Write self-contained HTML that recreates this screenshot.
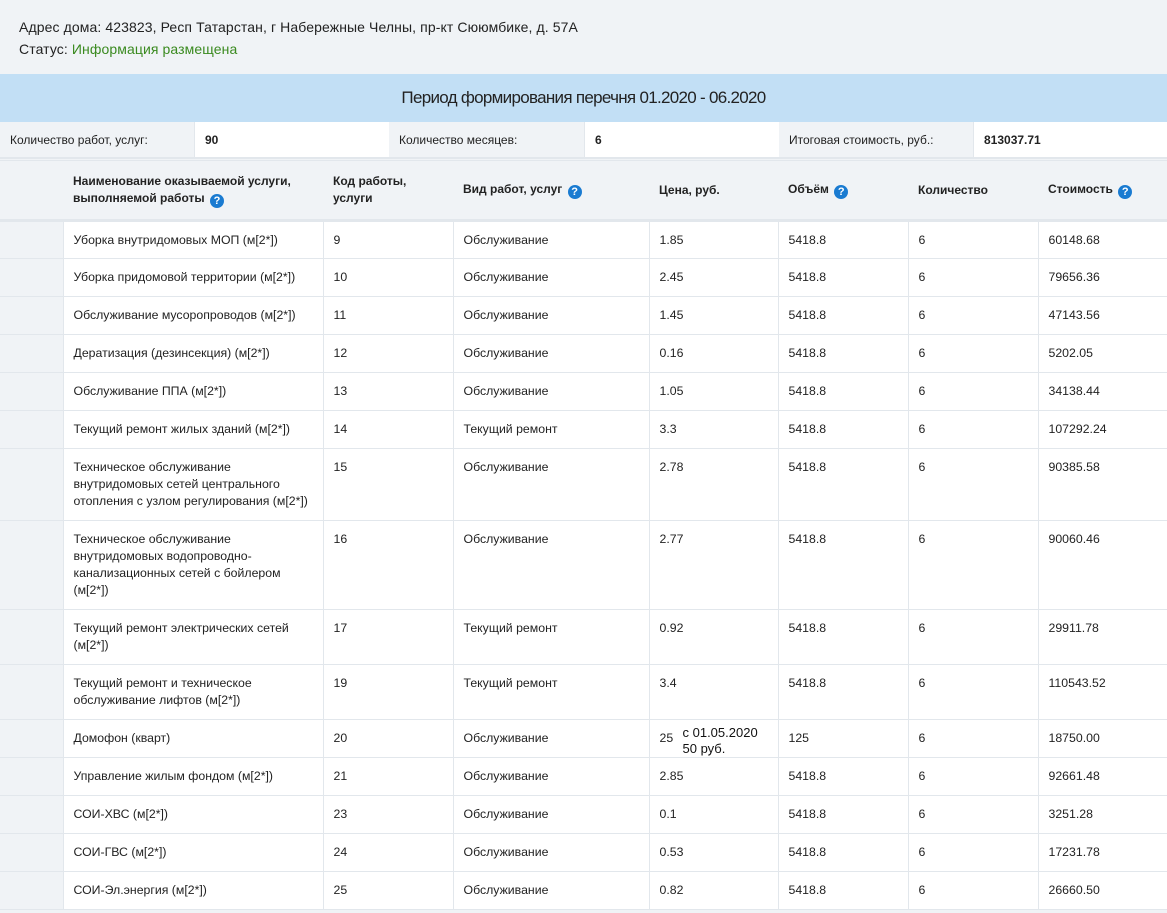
<!DOCTYPE html>
<html><head><meta charset="utf-8"><style>
body{margin:0;width:1167px;height:913px;overflow:hidden;background:#f0f3f6;font-family:"Liberation Sans",Arial,sans-serif;color:#222;}
.top{position:absolute;left:19px;top:16px;font-size:14px;line-height:22px;letter-spacing:0.1px}
.top .g{color:#3a8a1f}
.band{position:absolute;left:0;top:74px;width:1167px;height:48px;background:#c2dff5;text-align:center;font-size:17px;line-height:48px;letter-spacing:-0.7px}
.info{position:absolute;top:122px;left:0;width:1167px;height:38px;font-size:12px;letter-spacing:0}
.info div{position:absolute;top:0;height:37px;line-height:37px;padding-left:10px;box-sizing:border-box;border-bottom:2px solid #e2e7ec}
.w{background:#fff;font-weight:bold}
.lb{background:#f0f3f6;border-right:1px solid #e2e7ec}
table{position:absolute;top:160px;left:0;border-collapse:collapse;table-layout:fixed;width:1167px;font-size:12.3px;letter-spacing:0}
td,th{border:1px solid #e2e7ec;vertical-align:top;padding:10px 10px 0 10px;line-height:17px;text-align:left;box-sizing:border-box}
th{background:#f0f3f6;font-weight:bold;height:60px;padding-top:12px;border-bottom:3px solid #e2e7ec;border-left:none;border-right:none;font-size:12px}
td{background:#fff}
td.f{background:#f0f3f6;border-left:none}
td.n{padding-right:14px}
th.v{vertical-align:middle;padding-top:0}
.q{display:inline-block;width:14px;height:14px;border-radius:50%;background:#1a7bd1;color:#fff;font-size:11px;line-height:14px;text-align:center;font-weight:bold;vertical-align:-2px;margin-left:2px}
</style></head><body>
<div class="top">Адрес дома: 423823, Респ Татарстан, г Набережные Челны, пр-кт Сююмбике, д. 57А<br>Статус: <span class="g">Информация размещена</span></div>
<div class="band">Период формирования перечня 01.2020 - 06.2020</div>
<div class="info">
<div class="lb" style="left:0;width:195px">Количество работ, услуг:</div>
<div class="w" style="left:195px;width:194px">90</div>
<div class="lb" style="left:389px;width:196px">Количество месяцев:</div>
<div class="w" style="left:585px;width:194px">6</div>
<div class="lb" style="left:779px;width:195px">Итоговая стоимость, руб.:</div>
<div class="w" style="left:974px;width:193px">813037.71</div>
</div>
<table>
<colgroup><col style="width:63px"><col style="width:260px"><col style="width:130px"><col style="width:196px"><col style="width:129px"><col style="width:130px"><col style="width:130px"><col style="width:129px"></colgroup>
<tr><th></th><th>Наименование оказываемой услуги, выполняемой работы <span class="q">?</span></th><th>Код работы, услуги</th><th class="v">Вид работ, услуг <span class="q">?</span></th><th class="v">Цена, руб.</th><th class="v">Объём <span class="q">?</span></th><th class="v">Количество</th><th class="v">Стоимость <span class="q">?</span></th></tr>
<tr style="height:38px"><td class="f"></td><td class="n">Уборка внутридомовых МОП (м[2*])</td><td>9</td><td>Обслуживание</td><td>1.85</td><td>5418.8</td><td>6</td><td>60148.68</td></tr>
<tr style="height:38px"><td class="f"></td><td class="n">Уборка придомовой территории (м[2*])</td><td>10</td><td>Обслуживание</td><td>2.45</td><td>5418.8</td><td>6</td><td>79656.36</td></tr>
<tr style="height:38px"><td class="f"></td><td class="n">Обслуживание мусоропроводов (м[2*])</td><td>11</td><td>Обслуживание</td><td>1.45</td><td>5418.8</td><td>6</td><td>47143.56</td></tr>
<tr style="height:38px"><td class="f"></td><td class="n">Дератизация (дезинсекция) (м[2*])</td><td>12</td><td>Обслуживание</td><td>0.16</td><td>5418.8</td><td>6</td><td>5202.05</td></tr>
<tr style="height:38px"><td class="f"></td><td class="n">Обслуживание ППА (м[2*])</td><td>13</td><td>Обслуживание</td><td>1.05</td><td>5418.8</td><td>6</td><td>34138.44</td></tr>
<tr style="height:38px"><td class="f"></td><td class="n">Текущий ремонт жилых зданий (м[2*])</td><td>14</td><td>Текущий ремонт</td><td>3.3</td><td>5418.8</td><td>6</td><td>107292.24</td></tr>
<tr style="height:72px"><td class="f"></td><td class="n">Техническое обслуживание<br>внутридомовых сетей центрального<br>отопления с узлом регулирования (м[2*])</td><td>15</td><td>Обслуживание</td><td>2.78</td><td>5418.8</td><td>6</td><td>90385.58</td></tr>
<tr style="height:89px"><td class="f"></td><td class="n">Техническое обслуживание<br>внутридомовых водопроводно-<br>канализационных сетей с бойлером<br>(м[2*])</td><td>16</td><td>Обслуживание</td><td>2.77</td><td>5418.8</td><td>6</td><td>90060.46</td></tr>
<tr style="height:55px"><td class="f"></td><td class="n">Текущий ремонт электрических сетей<br>(м[2*])</td><td>17</td><td>Текущий ремонт</td><td>0.92</td><td>5418.8</td><td>6</td><td>29911.78</td></tr>
<tr style="height:55px"><td class="f"></td><td class="n">Текущий ремонт и техническое<br>обслуживание лифтов (м[2*])</td><td>19</td><td>Текущий ремонт</td><td>3.4</td><td>5418.8</td><td>6</td><td>110543.52</td></tr>
<tr style="height:38px"><td class="f"></td><td class="n">Домофон (кварт)</td><td>20</td><td>Обслуживание</td><td style="position:relative">25<span style="position:absolute;left:33px;top:5px;font-size:13px;line-height:16px;color:#111">с 01.05.2020<br>50 руб.</span></td><td>125</td><td>6</td><td>18750.00</td></tr>
<tr style="height:38px"><td class="f"></td><td class="n">Управление жилым фондом (м[2*])</td><td>21</td><td>Обслуживание</td><td>2.85</td><td>5418.8</td><td>6</td><td>92661.48</td></tr>
<tr style="height:38px"><td class="f"></td><td class="n">СОИ-ХВС (м[2*])</td><td>23</td><td>Обслуживание</td><td>0.1</td><td>5418.8</td><td>6</td><td>3251.28</td></tr>
<tr style="height:38px"><td class="f"></td><td class="n">СОИ-ГВС (м[2*])</td><td>24</td><td>Обслуживание</td><td>0.53</td><td>5418.8</td><td>6</td><td>17231.78</td></tr>
<tr style="height:38px"><td class="f"></td><td class="n">СОИ-Эл.энергия (м[2*])</td><td>25</td><td>Обслуживание</td><td>0.82</td><td>5418.8</td><td>6</td><td>26660.50</td></tr>
</table>
</body></html>
